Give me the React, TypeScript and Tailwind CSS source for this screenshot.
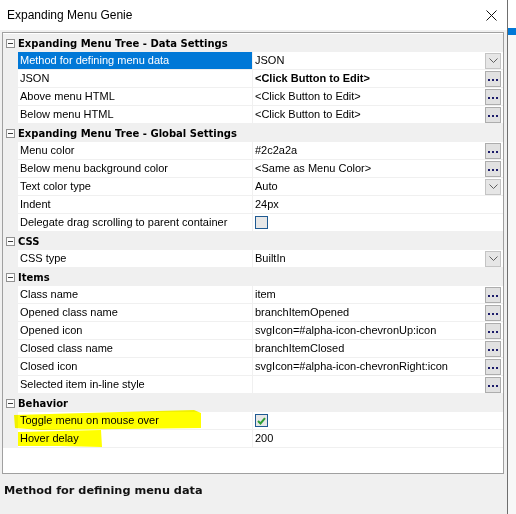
import type { ReactNode } from "react"

type Kind = "text" | "ellipsis" | "dropdown" | "checkbox" | "checked"

type Prop = {
  label: string
  value?: string
  kind: Kind
  bold?: boolean
  selected?: boolean
}

type Category = {
  title: string
  rows: Prop[]
}

const categories: Category[] = [
  {
    title: "Expanding Menu Tree - Data Settings",
    rows: [
      { label: "Method for defining menu data", value: "JSON", kind: "dropdown", selected: true },
      { label: "JSON", value: "<Click Button to Edit>", kind: "ellipsis", bold: true },
      { label: "Above menu HTML", value: "<Click Button to Edit>", kind: "ellipsis" },
      { label: "Below menu HTML", value: "<Click Button to Edit>", kind: "ellipsis" },
    ],
  },
  {
    title: "Expanding Menu Tree - Global Settings",
    rows: [
      { label: "Menu color", value: "#2c2a2a", kind: "ellipsis" },
      { label: "Below menu background color", value: "<Same as Menu Color>", kind: "ellipsis" },
      { label: "Text color type", value: "Auto", kind: "dropdown" },
      { label: "Indent", value: "24px", kind: "text" },
      { label: "Delegate drag scrolling to parent container", kind: "checkbox" },
    ],
  },
  {
    title: "CSS",
    rows: [{ label: "CSS type", value: "BuiltIn", kind: "dropdown" }],
  },
  {
    title: "Items",
    rows: [
      { label: "Class name", value: "item", kind: "ellipsis" },
      { label: "Opened class name", value: "branchItemOpened", kind: "ellipsis" },
      { label: "Opened icon", value: "svgIcon=#alpha-icon-chevronUp:icon", kind: "ellipsis" },
      { label: "Closed class name", value: "branchItemClosed", kind: "ellipsis" },
      { label: "Closed icon", value: "svgIcon=#alpha-icon-chevronRight:icon", kind: "ellipsis" },
      { label: "Selected item in-line style", value: "", kind: "ellipsis" },
    ],
  },
  {
    title: "Behavior",
    rows: [
      { label: "Toggle menu on mouse over", kind: "checked" },
      { label: "Hover delay", value: "200", kind: "text" },
    ],
  },
]

const ui = "font-['Liberation_Sans',Arial,sans-serif] text-[11px]"
const tahomaBold = "font-['DejaVu_Sans',Verdana,sans-serif] font-bold"

function CollapseBox() {
  return (
    <div className="flex h-[9px] w-[9px] items-center justify-center border border-[#919191] bg-[#fcfcfc]">
      <div className="h-px w-[5px] bg-[#3c3c3c]" />
    </div>
  )
}

function EllipsisButton() {
  return (
    <div className="flex h-[16px] w-[16px] items-end justify-center gap-[2px] border border-[#adadad] bg-[#e1e1e1] pb-[5px]">
      <div className="h-[2px] w-[2px] bg-[#1c1c6a]" />
      <div className="h-[2px] w-[2px] bg-[#1c1c6a]" />
      <div className="h-[2px] w-[2px] bg-[#1c1c6a]" />
    </div>
  )
}

function DropdownButton() {
  return (
    <div className="flex h-[16px] w-[16px] items-center justify-center border border-[#c4c4c4] bg-[#e6e6e6]">
      <svg width="9" height="5" viewBox="0 0 9 5" fill="none">
        <path d="M0.5 0.5 L4.5 4.5 L8.5 0.5" stroke="#5f5f5f" strokeWidth="1" />
      </svg>
    </div>
  )
}

function CheckBox({ checked }: { checked?: boolean }) {
  return (
    <div className="flex h-[13px] w-[13px] items-center justify-center border border-[#1f5a92] bg-[#e7e7e7]">
      {checked && (
        <svg width="9" height="8" viewBox="0 0 9 8" fill="none">
          <path d="M1 4 L3.5 6.5 L8 1.2" stroke="#2e9e36" strokeWidth="2" />
        </svg>
      )}
    </div>
  )
}

function CategoryRow({ title }: { title: string }) {
  return (
    <div className="flex h-[18px] items-center bg-[#f0f0f0]">
      <div className="flex w-[15px] justify-center">
        <CollapseBox />
      </div>
      <div className={`${tahomaBold} text-[10px] text-black`}>{title}</div>
    </div>
  )
}

function PropRow({ row }: { row: Prop }) {
  let control: ReactNode = null
  if (row.kind === "ellipsis") control = <EllipsisButton />
  if (row.kind === "dropdown") control = <DropdownButton />

  return (
    <div className="flex h-[18px]">
      <div className="w-[15px] bg-[#f0f0f0]" />
      <div className="flex w-[234px] flex-col">
        <div
          className={`flex h-[17px] items-center pl-[2px] ${ui} ${
            row.selected ? "bg-[#0078d7] text-white" : "bg-white text-black"
          }`}
        >
          {row.label}
        </div>
        <div className="h-px bg-[#f0f0f0]" />
      </div>
      <div className="w-px bg-[#f0f0f0]" />
      <div className="flex flex-1 flex-col">
        <div className="flex h-[17px] items-center justify-between bg-white pl-[2px] pr-[2px]">
          {row.kind === "checkbox" || row.kind === "checked" ? (
            <CheckBox checked={row.kind === "checked"} />
          ) : (
            <span className={`${ui} text-black ${row.bold ? "font-bold" : ""}`}>{row.value}</span>
          )}
          {control}
        </div>
        <div className="h-px bg-[#f0f0f0]" />
      </div>
    </div>
  )
}

export default function App() {
  return (
    <div className="relative flex h-[514px] w-[516px] overflow-hidden bg-[#f0f0f0]">
      <div className="flex w-[507px] flex-col">
        <div className="flex h-[30px] items-center justify-between bg-white pl-[7px] pr-[10px]">
          <span className="font-['Liberation_Sans',Arial,sans-serif] text-[12px] text-black">
            Expanding Menu Genie
          </span>
          <svg width="11" height="11" viewBox="0 0 11 11" fill="none">
            <path d="M0.5 0.5 L10.5 10.5 M10.5 0.5 L0.5 10.5" stroke="#111" strokeWidth="1" />
          </svg>
        </div>
        <div className="flex flex-1 flex-col bg-[#f0f0f0] pl-[2px] pt-[2px]">
          <div className="flex h-[442px] w-[502px] flex-col border border-[#a0a0a0] bg-white pt-px">
            {categories.map((cat) => (
              <div key={cat.title}>
                <CategoryRow title={cat.title} />
                {cat.rows.map((row) => (
                  <PropRow key={row.label} row={row} />
                ))}
              </div>
            ))}
          </div>
          <div className={`${tahomaBold} pl-[2px] pt-[9px] text-[11.3px] text-[#111]`}>
            Method for defining menu data
          </div>
        </div>
      </div>
      <div className="flex w-[9px] flex-col border-l border-[#6e6e6e]">
        <div className="h-[28px] bg-white" />
        <div className="h-[7px] bg-[#0078d7]" />
        <div className="flex-1 bg-[#f7f7f7]" />
      </div>

      <svg
        className="pointer-events-none absolute left-0 top-0 mix-blend-multiply"
        width="516"
        height="514"
        viewBox="0 0 516 514"
      >
        <path
          d="M14 415 L120 412 L194 410 L201 413 L201 428 L120 429 L40 430 L15 428 Z"
          fill="#ffff00"
        />
        <path d="M18 432 L101 430 L102 447 L60 446 L18 446 Z" fill="#ffff00" />
      </svg>
    </div>
  )
}
